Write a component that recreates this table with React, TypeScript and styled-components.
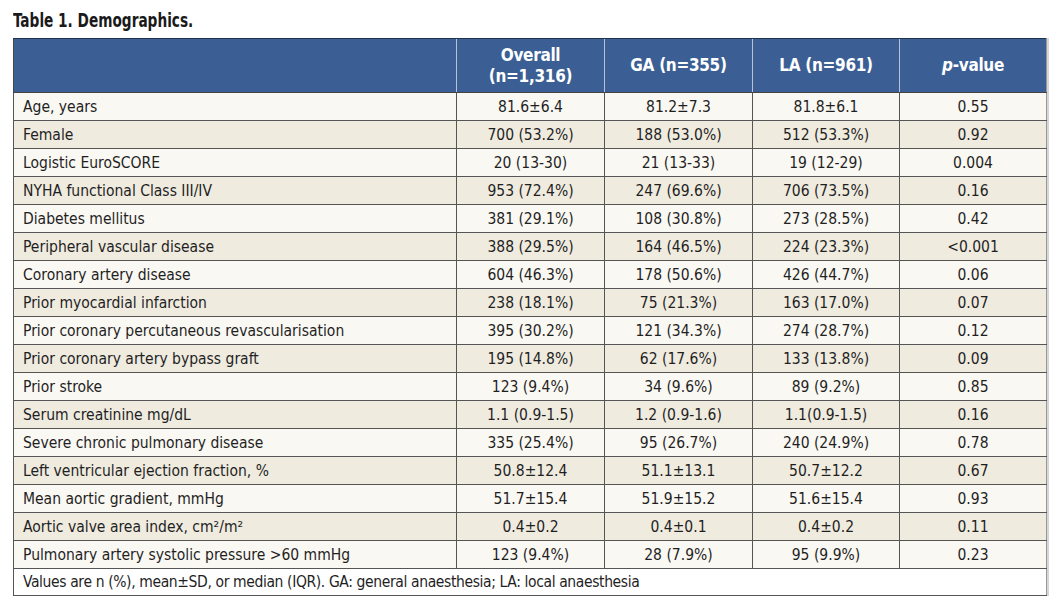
import styled, { createGlobalStyle } from 'styled-components';

const GlobalStyle = createGlobalStyle`
	body {
		margin: 0;
		background: #fff;
		font-family: "Liberation Sans Narrow", "DejaVu Sans Condensed", "Liberation Sans", sans-serif;
	}
`;

const rows: string[][] = [
	['Age, years', '81.6±6.4', '81.2±7.3', '81.8±6.1', '0.55'],
	['Female', '700 (53.2%)', '188 (53.0%)', '512 (53.3%)', '0.92'],
	['Logistic EuroSCORE', '20 (13-30)', '21 (13-33)', '19 (12-29)', '0.004'],
	['NYHA functional Class III/IV', '953 (72.4%)', '247 (69.6%)', '706 (73.5%)', '0.16'],
	['Diabetes mellitus', '381 (29.1%)', '108 (30.8%)', '273 (28.5%)', '0.42'],
	['Peripheral vascular disease', '388 (29.5%)', '164 (46.5%)', '224 (23.3%)', '<0.001'],
	['Coronary artery disease', '604 (46.3%)', '178 (50.6%)', '426 (44.7%)', '0.06'],
	['Prior myocardial infarction', '238 (18.1%)', '75 (21.3%)', '163 (17.0%)', '0.07'],
	['Prior coronary percutaneous revascularisation', '395 (30.2%)', '121 (34.3%)', '274 (28.7%)', '0.12'],
	['Prior coronary artery bypass graft', '195 (14.8%)', '62 (17.6%)', '133 (13.8%)', '0.09'],
	['Prior stroke', '123 (9.4%)', '34 (9.6%)', '89 (9.2%)', '0.85'],
	['Serum creatinine mg/dL', '1.1 (0.9-1.5)', '1.2 (0.9-1.6)', '1.1(0.9-1.5)', '0.16'],
	['Severe chronic pulmonary disease', '335 (25.4%)', '95 (26.7%)', '240 (24.9%)', '0.78'],
	['Left ventricular ejection fraction, %', '50.8±12.4', '51.1±13.1', '50.7±12.2', '0.67'],
	['Mean aortic gradient, mmHg', '51.7±15.4', '51.9±15.2', '51.6±15.4', '0.93'],
	['Aortic valve area index, cm²/m²', '0.4±0.2', '0.4±0.1', '0.4±0.2', '0.11'],
	['Pulmonary artery systolic pressure >60 mmHg', '123 (9.4%)', '28 (7.9%)', '95 (9.9%)', '0.23'],
];

const App = () => {
	return (
		<>
			<GlobalStyle />
			<Page>
				<Title>Table 1. Demographics.</Title>
				<Table>
					<colgroup>
						<col style={{ width: 443 }} />
						<col style={{ width: 148 }} />
						<col style={{ width: 148 }} />
						<col style={{ width: 147 }} />
						<col style={{ width: 147 }} />
					</colgroup>
					<thead>
						<tr>
							<HeadCell></HeadCell>
							<HeadCell>Overall<br />(n=1,316)</HeadCell>
							<HeadCell>GA (n=355)</HeadCell>
							<HeadCell>LA (n=961)</HeadCell>
							<HeadCell><i>p</i>-value</HeadCell>
						</tr>
					</thead>
					<tbody>
						{rows.map((r, i) => (
							<Row key={i} $alt={i % 2 === 1}>
								<LabelCell>{r[0]}</LabelCell>
								<Cell>{r[1]}</Cell>
								<Cell>{r[2]}</Cell>
								<Cell>{r[3]}</Cell>
								<Cell>{r[4]}</Cell>
							</Row>
						))}
						<tr>
							<Footnote colSpan={5}>
								Values are n (%), mean±SD, or median (IQR). GA: general anaesthesia; LA: local anaesthesia
							</Footnote>
						</tr>
					</tbody>
				</Table>
			</Page>
		</>
	);
};
export default App;

const Page = styled.div`
	padding: 8px 0 0 13px;
	width: 1034px;
`;

const Title = styled.h1`
	margin: 0;
	height: 30px;
	font-size: 19px;
	font-weight: bold;
	color: #1a1a1a;
	line-height: 24px;
	display: inline-block;
	transform: scaleX(0.8);
	transform-origin: left center;
	white-space: nowrap;
	width: 100%;
`;

const Table = styled.table`
	border-collapse: collapse;
	table-layout: fixed;
	width: 1034px;
	color: #1f1f1f;
	font-size: 15.5px;
	box-shadow: 2px 0 0 #d6d6d6;
`;

const HeadCell = styled.th`
	background: #3b5f94;
	color: #fff;
	font-size: 17px;
	font-weight: bold;
	line-height: 21px;
	height: 53px;
	padding: 0;
	text-align: center;
	letter-spacing: -0.3px;
	border-top: 1px solid #24334d;
	border-bottom: 1px solid #444;
	border-left: 1px solid #b9c3d3;
	&:first-child {
		border-left: 1px solid #444;
	}
	&:last-child {
		border-right: 1px solid #999;
	}
`;

const Row = styled.tr<{ $alt: boolean }>`
	background: ${(p) => (p.$alt ? '#efebdf' : '#faf8f3')};
`;

const Cell = styled.td`
	height: 27px;
	padding: 0;
	text-align: center;
	border: 1px solid #555;
	&:last-child {
		border-right: 1px solid #999;
	}
`;

const LabelCell = styled(Cell)`
	text-align: left;
	padding-left: 9px;
`;

const Footnote = styled.td`
	height: 26px;
	padding: 0 0 0 9px;
	background: #fff;
	font-size: 15.5px;
	letter-spacing: -0.38px;
	border: 1px solid #555;
	border-right: 1px solid #999;
`;
